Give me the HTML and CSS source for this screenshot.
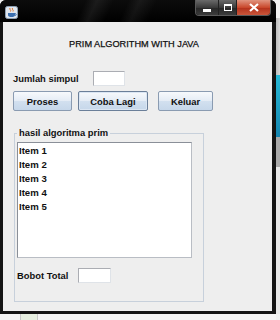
FILE: index.html
```html
<!DOCTYPE html>
<html lang="en">
  <head>
    <meta charset="UTF-8" />
    <title>Prim Algorithm</title>
    <link rel="stylesheet" href="styles.css">
  </head>
  <body>
    <div class="screen">
      <div class="window">
        <!-- Barra de titulo -->
        <div class="titlebar">
          <span class="app-icon">
            <svg width="13" height="13" viewBox="0 0 13 13">
              <rect x="0.5" y="0.5" width="12" height="12" rx="2" fill="#dfe6ee" stroke="#8ea0b4"/>
              <path d="M5 2 C4 3.5 6.5 4 5.5 5.5 M7.5 2 C6.5 3.5 9 4 8 5.5" stroke="#e0762a" fill="none"/>
              <path d="M3 7 H10 V9 C10 10.5 8.5 11 6.5 11 C4.5 11 3 10.5 3 9 Z" fill="#3b6fb0"/>
              <path d="M10 7.5 C11.5 7.5 11.5 9.5 10 9.5" stroke="#3b6fb0" fill="none"/>
            </svg>
          </span>
          <div class="caption-buttons">
            <span class="cap-btn cap-min"><i></i></span>
            <span class="cap-btn cap-max"><i></i></span>
            <span class="cap-btn cap-close">
              <svg width="12" height="9" viewBox="0 0 12 9">
                <path d="M2 1 L10 8 M10 1 L2 8" stroke="#fff" stroke-width="2.2"/>
              </svg>
            </span>
          </div>
        </div>

        <div class="content">
          <div class="title">PRIM ALGORITHM WITH JAVA</div>

          <div class="field-row">
            <label class="lbl lbl-simpul">Jumlah simpul</label>
            <span class="textbox"></span>
          </div>

          <div class="buttons">
            <button class="btn btn-proses">Proses</button>
            <button class="btn btn-coba focus">Coba Lagi</button>
            <button class="btn btn-keluar">Keluar</button>
          </div>

          <fieldset class="result">
            <legend>hasil algoritma prim</legend>
            <ul class="listbox">
              <li>Item 1</li>
              <li>Item 2</li>
              <li>Item 3</li>
              <li>Item 4</li>
              <li>Item 5</li>
            </ul>
            <div class="field-row bobot">
              <label class="lbl lbl-bobot">Bobot Total</label>
              <span class="textbox textbox-bobot"></span>
            </div>
          </fieldset>
        </div>
      </div>

      <!-- fondo del escritorio -->
      <div class="desk-right">
        <span class="d1"></span>
        <span class="d2"></span>
        <span class="d3"></span>
        <span class="d4"></span>
        <span class="d5"></span>
      </div>
      <div class="desk-bottom">
        <span class="tab"></span>
      </div>
      <div class="desk-corner"></div>
    </div>
  </body>
</html>
```

FILE: styles.css
```css
body {
  margin: 0;
  padding: 0;
  background-color: #efefef;
  font-family: "Liberation Sans", Arial, sans-serif;
  color: #222;
}

.screen {
  display: grid;
  grid-template-columns: 276px 4px;
  grid-template-rows: 314px 6px;
  width: 280px;
  height: 320px;
  overflow: hidden;
}

.window {
  display: flex;
  flex-direction: column;
  background: #141414;
  border-radius: 6px 6px 0 0;
  padding: 0 4px 3px 3px;
  box-sizing: border-box;
}

.titlebar {
  height: 22px;
  flex: none;
  display: flex;
  justify-content: space-between;
  background:
    linear-gradient(115deg, transparent 30%, rgba(255,255,255,0.07) 34%, transparent 40%, transparent 45%, rgba(255,255,255,0.06) 49%, transparent 55%),
    linear-gradient(#0c0c0c, #000);
  margin: 0 -4px 0 -3px;
  padding: 0 5px 0 5px;
  border-radius: 6px 6px 0 0;
}

.app-icon {
  margin-top: 5px;
  width: 13px;
  height: 13px;
}

.caption-buttons {
  display: flex;
  height: 15px;
  margin-right: 0;
  border: 1px solid #5a5a5a;
  border-top: none;
  border-radius: 0 0 4px 4px;
  overflow: hidden;
}

.cap-btn {
  display: flex;
  align-items: center;
  justify-content: center;
  height: 15px;
}

.cap-min,
.cap-max {
  width: 22px;
  background: linear-gradient(#6a6a6a, #3a3a3a 50%, #262626 51%, #3c3c3c);
  border-right: 1px solid #222;
}

.cap-max {
  width: 17px;
}

.cap-min i {
  display: block;
  width: 8px;
  height: 3px;
  margin-top: 5px;
  background: #fff;
}

.cap-max i {
  display: block;
  width: 6px;
  height: 4px;
  border: 1px solid #fff;
  border-top-width: 2px;
}

.cap-close {
  width: 33px;
  background: linear-gradient(#e0947f, #c9482c 50%, #b3301a 51%, #c9563b);
}

.content {
  flex: 1;
  background: #eeeeee;
  display: flex;
  flex-direction: column;
  font-size: 9.4px;
  font-weight: bold;
}

.title {
  margin-top: 16px;
  height: 12px;
  line-height: 12px;
  text-align: center;
  padding-right: 7px;
  font-size: 9.2px;
  font-weight: normal;
  color: #111;
  -webkit-text-stroke: 0.25px #111;
}

.field-row {
  display: flex;
  align-items: center;
  margin-top: 21px;
  padding-left: 10px;
  height: 15px;
}

.lbl {
  width: 80px;
  color: #111;
}

.textbox {
  width: 32px;
  height: 15px;
  box-sizing: border-box;
  background: #fff;
  border: 1px solid #abadb3;
  border-bottom-color: #dfe3e8;
  border-right-color: #dfe3e8;
}

.buttons {
  display: flex;
  margin-top: 5px;
  padding-left: 10px;
}

.btn {
  height: 20px;
  padding: 0;
  margin: 0;
  border: 1px solid #8a9bb1;
  border-radius: 2px;
  background: linear-gradient(#f7f9fc, #e4ecf5 50%, #d2e0ef 51%, #c6d7ea);
  font-family: "Liberation Sans", Arial, sans-serif;
  font-size: 9.4px;
  font-weight: bold;
  color: #111;
}

.btn-proses {
  width: 59px;
}

.btn-coba {
  width: 70px;
  margin-left: 6px;
}

.btn-keluar {
  width: 55px;
  margin-left: 10px;
}

.btn.focus {
  border-color: #6b7f99;
  box-shadow: inset 0 0 0 1px #dbe6f3;
}

.result {
  margin: 16px 0 0 11px;
  padding: 0 0 18px 0;
  width: 190px;
  box-sizing: border-box;
  border: 1px solid #c7d0db;
}

.result legend {
  margin-left: 2px;
  padding: 0 2px;
  line-height: 12px;
  color: #111;
}

.listbox {
  list-style: none;
  margin: 3px 0 0 2px;
  padding: 1px 0 0 1px;
  width: 175px;
  height: 116px;
  box-sizing: border-box;
  background: #fff;
  border: 1px solid #8a8f98;
  border-right-color: #b9bdc4;
  border-bottom-color: #b9bdc4;
}

.listbox li {
  height: 14px;
  line-height: 14px;
  font-size: 9.6px;
  color: #111;
}

.bobot {
  margin-top: 10px;
  padding-left: 2px;
}

.lbl-bobot {
  width: 61px;
}

.textbox-bobot {
  width: 33px;
}

.desk-right {
  display: flex;
  flex-direction: column;
  background: #e4e4e4;
}

.desk-right span {
  display: block;
}

.d1 {
  height: 18px;
  background: #f2f2f2;
}

.d2 {
  height: 57px;
  background: linear-gradient(90deg, #bdbdbd, #d8d8d8);
}

.d3 {
  height: 62px;
  background: linear-gradient(#27b9d6, #1585b0);
}

.d4 {
  height: 30px;
  background: #a9a9a9;
}

.d5 {
  flex: 1;
  background: #e9e9e9;
}

.desk-bottom {
  background: #f4f4f4;
  padding-left: 20px;
}

.tab {
  display: block;
  width: 16px;
  height: 6px;
  border-left: 1px solid #c8c8c8;
  border-right: 1px solid #c8c8c8;
  background: #e6eee0;
}

.desk-corner {
  background: #f0f0f0;
}
```
